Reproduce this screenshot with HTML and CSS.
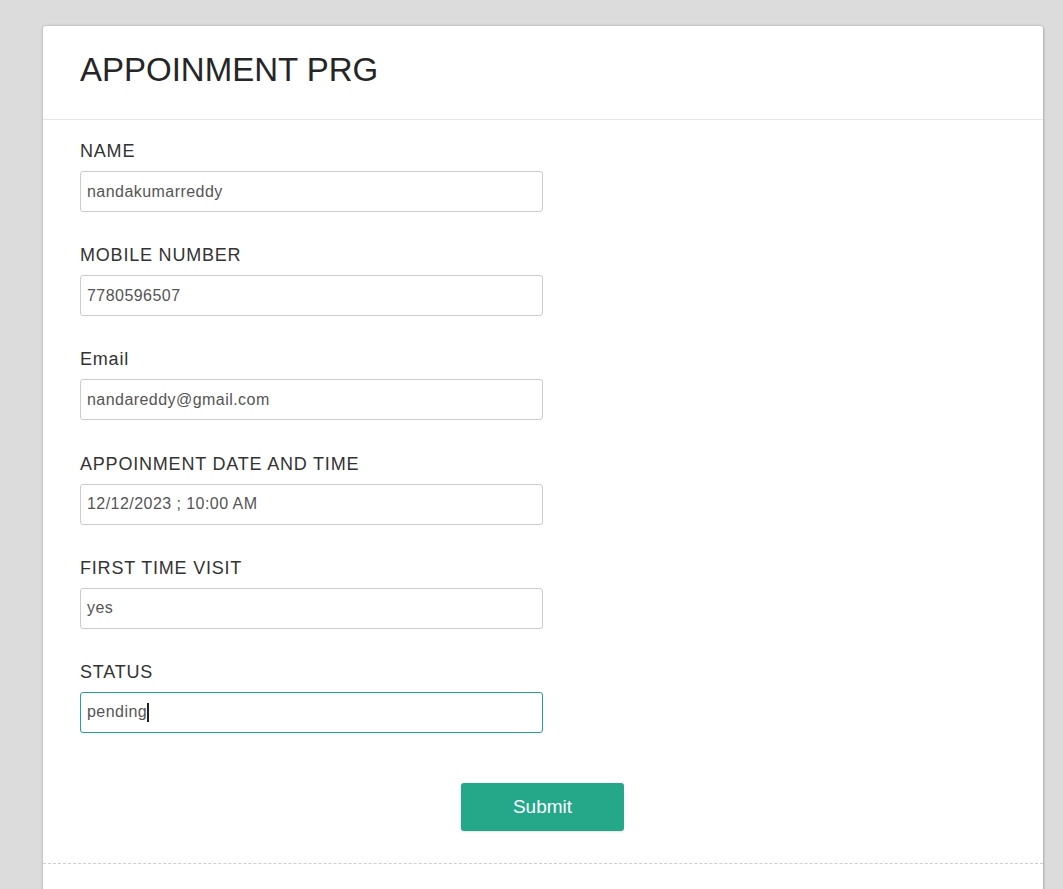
FILE: index.html
```html
<!DOCTYPE html>
<html>
<head>
<meta charset="utf-8">
<link rel="stylesheet" href="styles.css">
</head>
<body>
<div class="card">
  <div class="card-header">
    <h1 class="title">APPOINMENT PRG</h1>
  </div>
  <form class="card-body">
    <div class="field">
      <label class="label">NAME</label>
      <input class="input" type="text" value="nandakumarreddy">
    </div>
    <div class="field">
      <label class="label">MOBILE NUMBER</label>
      <input class="input" type="text" value="7780596507">
    </div>
    <div class="field">
      <label class="label">Email</label>
      <input class="input" type="text" value="nandareddy@gmail.com">
    </div>
    <div class="field">
      <label class="label">APPOINMENT DATE AND TIME</label>
      <input class="input" type="text" value="12/12/2023 ; 10:00 AM">
    </div>
    <div class="field">
      <label class="label">FIRST TIME VISIT</label>
      <input class="input" type="text" value="yes">
    </div>
    <div class="field">
      <label class="label">STATUS</label>
      <div class="input-wrap">
        <input class="input input-focus" type="text" value="pending">
        <span class="caret"></span>
      </div>
    </div>
    <div class="actions">
      <button class="btn" type="button">Submit</button>
    </div>
  </form>
  <div class="card-footer"></div>
</div>
</body>
</html>
```
FILE: styles.css
```css
* { box-sizing: border-box; }
html, body {
  margin: 0;
  padding: 0;
  background: #dcdcdc;
  font-family: "Liberation Sans", Arial, sans-serif;
  height: 889px;
  overflow: hidden;
}
.card {
  margin: 26px 0 0 43px;
  width: 1000px;
  min-height: 900px;
  background: #fff;
  border-radius: 3px 3px 0 0;
  box-shadow: 0 0 3px rgba(0,0,0,0.25), 1px 1px 2px rgba(0,0,0,0.1);
}
.card-header {
  height: 94px;
  padding: 0 37px;
  border-bottom: 1px solid #e6e6e6;
  display: flex;
  align-items: flex-start;
}
.title {
  margin: 0;
  padding-top: 25px;
  font-size: 33px;
  font-weight: normal;
  line-height: 38px;
  color: #262626;
}
.card-body {
  padding: 20px 37px 32px;
  display: flex;
  flex-direction: column;
}
.field {
  display: flex;
  flex-direction: column;
  margin-bottom: 32.2px;
}
.label {
  font-size: 18px;
  line-height: 22px;
  letter-spacing: 0.8px;
  color: #333;
  margin-bottom: 9px;
}
.input-wrap {
  position: relative;
  width: 463px;
}
.input {
  width: 463px;
  height: 41px;
  border: 1px solid #cccccc;
  border-radius: 3px;
  padding: 0 6px;
  font-family: "Liberation Sans", Arial, sans-serif;
  font-size: 16px;
  letter-spacing: 0.45px;
  color: #555;
  background: #fff;
  outline: none;
}
.input-focus {
  border-color: #23a485;
}
.caret {
  position: absolute;
  left: 67px;
  top: 11px;
  width: 1.5px;
  height: 19px;
  background: #222;
}
.actions {
  display: flex;
  justify-content: center;
  padding-top: 18px;
}
.btn {
  width: 163px;
  height: 48px;
  margin-left: -1px;
  border: none;
  border-radius: 3px;
  background: #25a78a;
  color: #fff;
  font-family: "Liberation Sans", Arial, sans-serif;
  font-size: 19px;
  box-shadow: 0 1px 2px rgba(0,0,0,0.12);
}
.card-footer {
  border-top: 1px dashed #cfcfcf;
}
```
